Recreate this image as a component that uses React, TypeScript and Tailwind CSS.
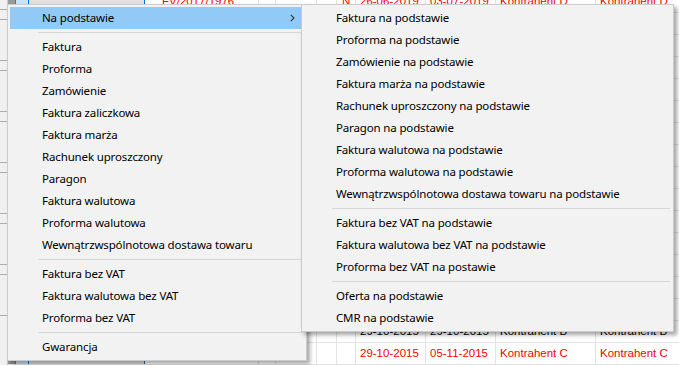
import React from 'react';

type Entry = { label: string; arrow?: boolean; active?: boolean } | 'sep';

const mainItems: Entry[] = [
  { label: 'Na podstawie', arrow: true, active: true },
  'sep',
  { label: 'Faktura' },
  { label: 'Proforma' },
  { label: 'Zamówienie' },
  { label: 'Faktura zaliczkowa' },
  { label: 'Faktura marża' },
  { label: 'Rachunek uproszczony' },
  { label: 'Paragon' },
  { label: 'Faktura walutowa' },
  { label: 'Proforma walutowa' },
  { label: 'Wewnątrzwspólnotowa dostawa towaru' },
  'sep',
  { label: 'Faktura bez VAT' },
  { label: 'Faktura walutowa bez VAT' },
  { label: 'Proforma bez VAT' },
  'sep',
  { label: 'Gwarancja' },
];

const subItems: Entry[] = [
  { label: 'Faktura na podstawie' },
  { label: 'Proforma na podstawie' },
  { label: 'Zamówienie na podstawie' },
  { label: 'Faktura marża na podstawie' },
  { label: 'Rachunek uproszczony na podstawie' },
  { label: 'Paragon na podstawie' },
  { label: 'Faktura walutowa na podstawie' },
  { label: 'Proforma walutowa na podstawie' },
  { label: 'Wewnątrzwspólnotowa dostawa towaru na podstawie' },
  'sep',
  { label: 'Faktura bez VAT na podstawie' },
  { label: 'Faktura walutowa bez VAT na podstawie' },
  { label: 'Proforma bez VAT na postawie' },
  'sep',
  { label: 'Oferta na podstawie' },
  { label: 'CMR na podstawie' },
];

// background grid rows (mostly hidden behind the menus)
const rows: { color: string; cells: string[] }[] = [
  { color: 'text-[#ff0000]', cells: ['FV/2017/1976', 'N', '26-06-2019', '03-07-2019', 'Kontrahent D', 'Kontrahent D'] },
  ...Array.from({ length: 14 }, () => ({ color: 'text-black', cells: ['', '', '', '', '', ''] })),
  { color: 'text-black', cells: ['', '', '29-10-2015', '29-10-2015', 'Kontrahent B', 'Kontrahent B'] },
  { color: 'text-[#ff0000]', cells: ['', '', '29-10-2015', '05-11-2015', 'Kontrahent C', 'Kontrahent C'] },
];

function MenuList({ items }: { items: Entry[] }) {
  return (
    <div className="flex flex-col px-[2px] py-[2px]">
      {items.map((it, i) =>
        it === 'sep' ? (
          <div key={i} className="h-[7px] flex items-center pl-[28px] pr-[1px]">
            <div className="h-px w-full bg-[#d7d7d7]" />
          </div>
        ) : (
          <div
            key={i}
            className={`h-[22px] flex items-center pl-[32px] pr-[8px] whitespace-nowrap ${it.active ? 'bg-[#91c9f7]' : ''}`}
          >
            <span className="flex-1">{it.label}</span>
            {it.arrow && (
              <svg width="5" height="8" viewBox="0 0 5 8" className="mr-[1px]">
                <path d="M0.8 0.8 L4 4 L0.8 7.2" fill="none" stroke="#333" strokeWidth="1.1" />
              </svg>
            )}
          </div>
        )
      )}
    </div>
  );
}

export default function App() {
  return (
    <div className="relative w-[679px] h-[365px] overflow-hidden bg-white font-['Noto_Sans',sans-serif]">
      {/* background grid */}
      <div className="flex h-full">
        <div className="w-[8px] flex flex-col bg-[#f0f0f0] border-r border-[#c8c8c8]">
          <div className="h-[10px] border-b border-[#adadad]" />
          {[0, 1, 2, 3, 4, 5].map((k) => (
            <div key={k} className="h-[42px] mt-[9px] border-y border-[#adadad]" />
          ))}
        </div>
        <div className="flex-1 flex flex-col -mt-[9px] font-['Liberation_Sans',sans-serif] text-[11.5px]">
          {rows.map((r, i) => (
            <div key={i} className={`h-[22px] shrink-0 flex border-b border-[#e3e3e3] ${r.color}`}>
              <div className="w-[8px] bg-[#9a9a9a] border-r border-[#6d6d6d]" />
              <div className="w-[12px] bg-[#cce4f7]" />
              <div className="w-[117px] bg-[#e1e1e1] border-x border-[#0078d7]" />
              <div className="w-[114px] border-r border-[#e3e3e3] pl-[17px] flex items-center text-[#ff0000]">{r.cells[0]}</div>
              <div className="w-[17px] border-r border-[#e3e3e3]" />
              <div className="w-[41px] border-r border-[#e3e3e3]" />
              <div className="w-[20px] border-r border-[#e3e3e3]" />
              <div className="w-[19px] border-r border-[#e3e3e3] pl-[5px] flex items-center">{r.cells[1]}</div>
              <div className="w-[70px] border-r border-[#e3e3e3] pl-[4px] flex items-center">{r.cells[2]}</div>
              <div className="w-[70px] border-r border-[#e3e3e3] pl-[4px] flex items-center">{r.cells[3]}</div>
              <div className="w-[100px] border-r border-[#e3e3e3] pl-[4px] flex items-center">{r.cells[4]}</div>
              <div className="flex-1 pl-[4px] flex items-center">{r.cells[5]}</div>
            </div>
          ))}
        </div>
      </div>

      {/* main context menu */}
      <div className="absolute left-[7px] top-[4px] w-[300px] bg-[#f2f2f2] border border-[#cccccc] shadow-[3px_3px_4px_rgba(0,0,0,0.35)] text-[11.5px] tracking-[-0.15px] text-black">
        <MenuList items={mainItems} />
      </div>

      {/* submenu */}
      <div className="absolute left-[301px] top-[4px] w-[373px] bg-[#f2f2f2] border border-[#cccccc] shadow-[3px_3px_4px_rgba(0,0,0,0.35)] text-[11.5px] tracking-[-0.15px] text-black">
        <MenuList items={subItems} />
      </div>
    </div>
  );
}
